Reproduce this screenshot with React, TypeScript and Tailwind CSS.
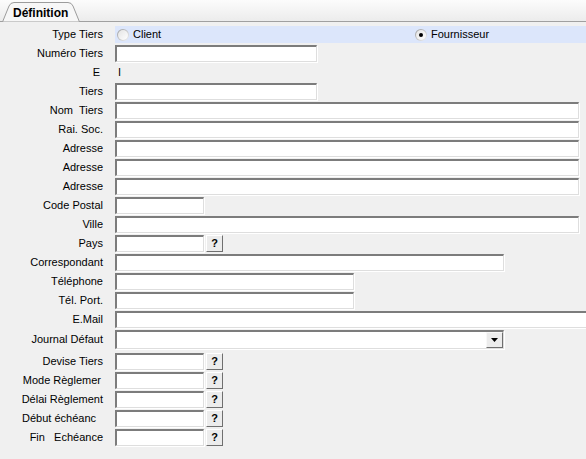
import React from 'react';

type Field = {
  label: string;
  width: number;
  lookup?: boolean;
  labelPad?: number;
};

const topFields: Field[] = [
  { label: 'Tiers', width: 202 },
  { label: 'Nom  Tiers', width: 464 },
  { label: 'Rai. Soc.', width: 464 },
  { label: 'Adresse', width: 464 },
  { label: 'Adresse', width: 464 },
  { label: 'Adresse', width: 464 },
  { label: 'Code Postal', width: 89 },
  { label: 'Ville', width: 464 },
  { label: 'Pays', width: 89, lookup: true },
  { label: 'Correspondant', width: 389 },
  { label: 'Téléphone', width: 239 },
  { label: 'Tél. Port.', width: 239 },
  { label: 'E.Mail', width: 480 },
];

const bottomFields: Field[] = [
  { label: 'Devise Tiers', width: 89, lookup: true },
  { label: 'Mode Règlemer', width: 89, lookup: true, labelPad: 2 },
  { label: 'Délai Règlement', width: 89, lookup: true },
  { label: 'Début échéanc', width: 89, lookup: true, labelPad: 7 },
  { label: 'Fin   Echéance', width: 89, lookup: true },
];

function Label({ text, pad = 0 }: { text: string; pad?: number }) {
  return (
    <div
      className="w-[115px] shrink-0 text-right whitespace-pre pr-[12px]"
      style={pad ? { paddingRight: 12 + pad } : undefined}
    >
      {text}
    </div>
  );
}

function TextBox({ width, height = 17 }: { width: number; height?: number }) {
  return (
    <div
      className="shrink-0 bg-white border-t-2 border-l-2 border-t-[#7c7c7c] border-l-[#7c7c7c] border-b border-r border-b-[#dedede] border-r-[#dedede] shadow-[1px_1px_0_#ffffff]"
      style={{ width, height }}
    />
  );
}

function LookupButton() {
  return (
    <div className="ml-[2px] w-[17px] h-[17px] shrink-0 flex items-center justify-center bg-[#ececec] border-t border-l border-t-white border-l-white border-b border-r border-b-[#6f6f6f] border-r-[#6f6f6f] font-bold text-[11px] leading-none">
      ?
    </div>
  );
}

function Radio({ checked }: { checked?: boolean }) {
  return (
    <div className="w-[12px] h-[12px] rounded-full shrink-0 bg-gradient-to-br from-[#9a9a9a] to-[#f4f4f4] p-[1px]">
      <div className="w-full h-full rounded-full bg-gradient-to-br from-[#e4e4e4] to-white flex items-center justify-center">
        {checked && <div className="w-[4px] h-[4px] rounded-full bg-black" />}
      </div>
    </div>
  );
}

function FieldRow({ field }: { field: Field }) {
  return (
    <div className="h-[19px] flex items-center">
      <Label text={field.label} pad={field.labelPad} />
      <TextBox width={field.width} />
      {field.lookup && <LookupButton />}
    </div>
  );
}

export default function App() {
  return (
    <div className="w-[586px] h-[459px] overflow-hidden bg-[#f0f0f0] text-[11px] text-black font-['Liberation_Sans',Arial,sans-serif]">
      {/* tab strip */}
      <div className="h-[22px] flex items-end pl-[2px] bg-gradient-to-b from-[#fcfcfc] to-[#ececec] border-b border-[#a0a0a0]">
        <div className="relative w-[78px] h-[20px] mb-[-1px] flex items-center pl-[11px]">
          <svg className="absolute inset-0" width="78" height="20" viewBox="0 0 78 20">
            <path d="M0.5 20 L7 4 Q8.5 0.5 12 0.5 L66 0.5 Q69.5 0.5 71 4 L77.5 20 Z" fill="#f7f7f7" stroke="#9c9c9c" />
            <path d="M1 20.5 L77 20.5" stroke="#f0f0f0" />
          </svg>
          <span className="relative font-bold text-[12px] pt-[1px]">Définition</span>
        </div>
      </div>

      <div className="pt-[3px] flex flex-col">
        {/* Type Tiers */}
        <div className="h-[19px] flex items-center">
          <Label text="Type Tiers" />
          <div className="flex-1 h-[17px] bg-[#dce6fb] flex items-center pl-[2px]">
            <div className="w-[298px] flex items-center gap-[4px]">
              <Radio />
              <span>Client</span>
            </div>
            <div className="flex items-center gap-[4px]">
              <Radio checked />
              <span>Fournisseur</span>
            </div>
          </div>
        </div>

        <FieldRow field={{ label: 'Numéro Tiers', width: 202 }} />

        <div className="h-[19px] flex items-center">
          <Label text="E" pad={3} />
          <span className="pl-[3px]">I</span>
        </div>

        {topFields.map((f, i) => (
          <FieldRow key={i} field={f} />
        ))}

        {/* Journal Défaut combo */}
        <div className="h-[23px] flex items-start pt-[1px]">
          <div className="h-[19px] flex items-center">
            <Label text="Journal Défaut" />
          </div>
          <div className="w-[389px] h-[19px] flex bg-white border-t-2 border-l-2 border-t-[#7c7c7c] border-l-[#7c7c7c] border-b border-r border-b-[#dedede] border-r-[#dedede] shadow-[1px_1px_0_#ffffff]">
            <div className="flex-1" />
            <div className="w-[17px] h-full flex items-center justify-center bg-[#ececec] border-t border-l border-t-[#f8f8f8] border-l-[#f8f8f8] border-b border-r border-b-[#6f6f6f] border-r-[#6f6f6f]">
              <svg width="7" height="4" viewBox="0 0 7 4">
                <path d="M0 0 H7 L3.5 4 Z" fill="#000" />
              </svg>
            </div>
          </div>
        </div>

        {bottomFields.map((f, i) => (
          <FieldRow key={i} field={f} />
        ))}
      </div>
    </div>
  );
}
